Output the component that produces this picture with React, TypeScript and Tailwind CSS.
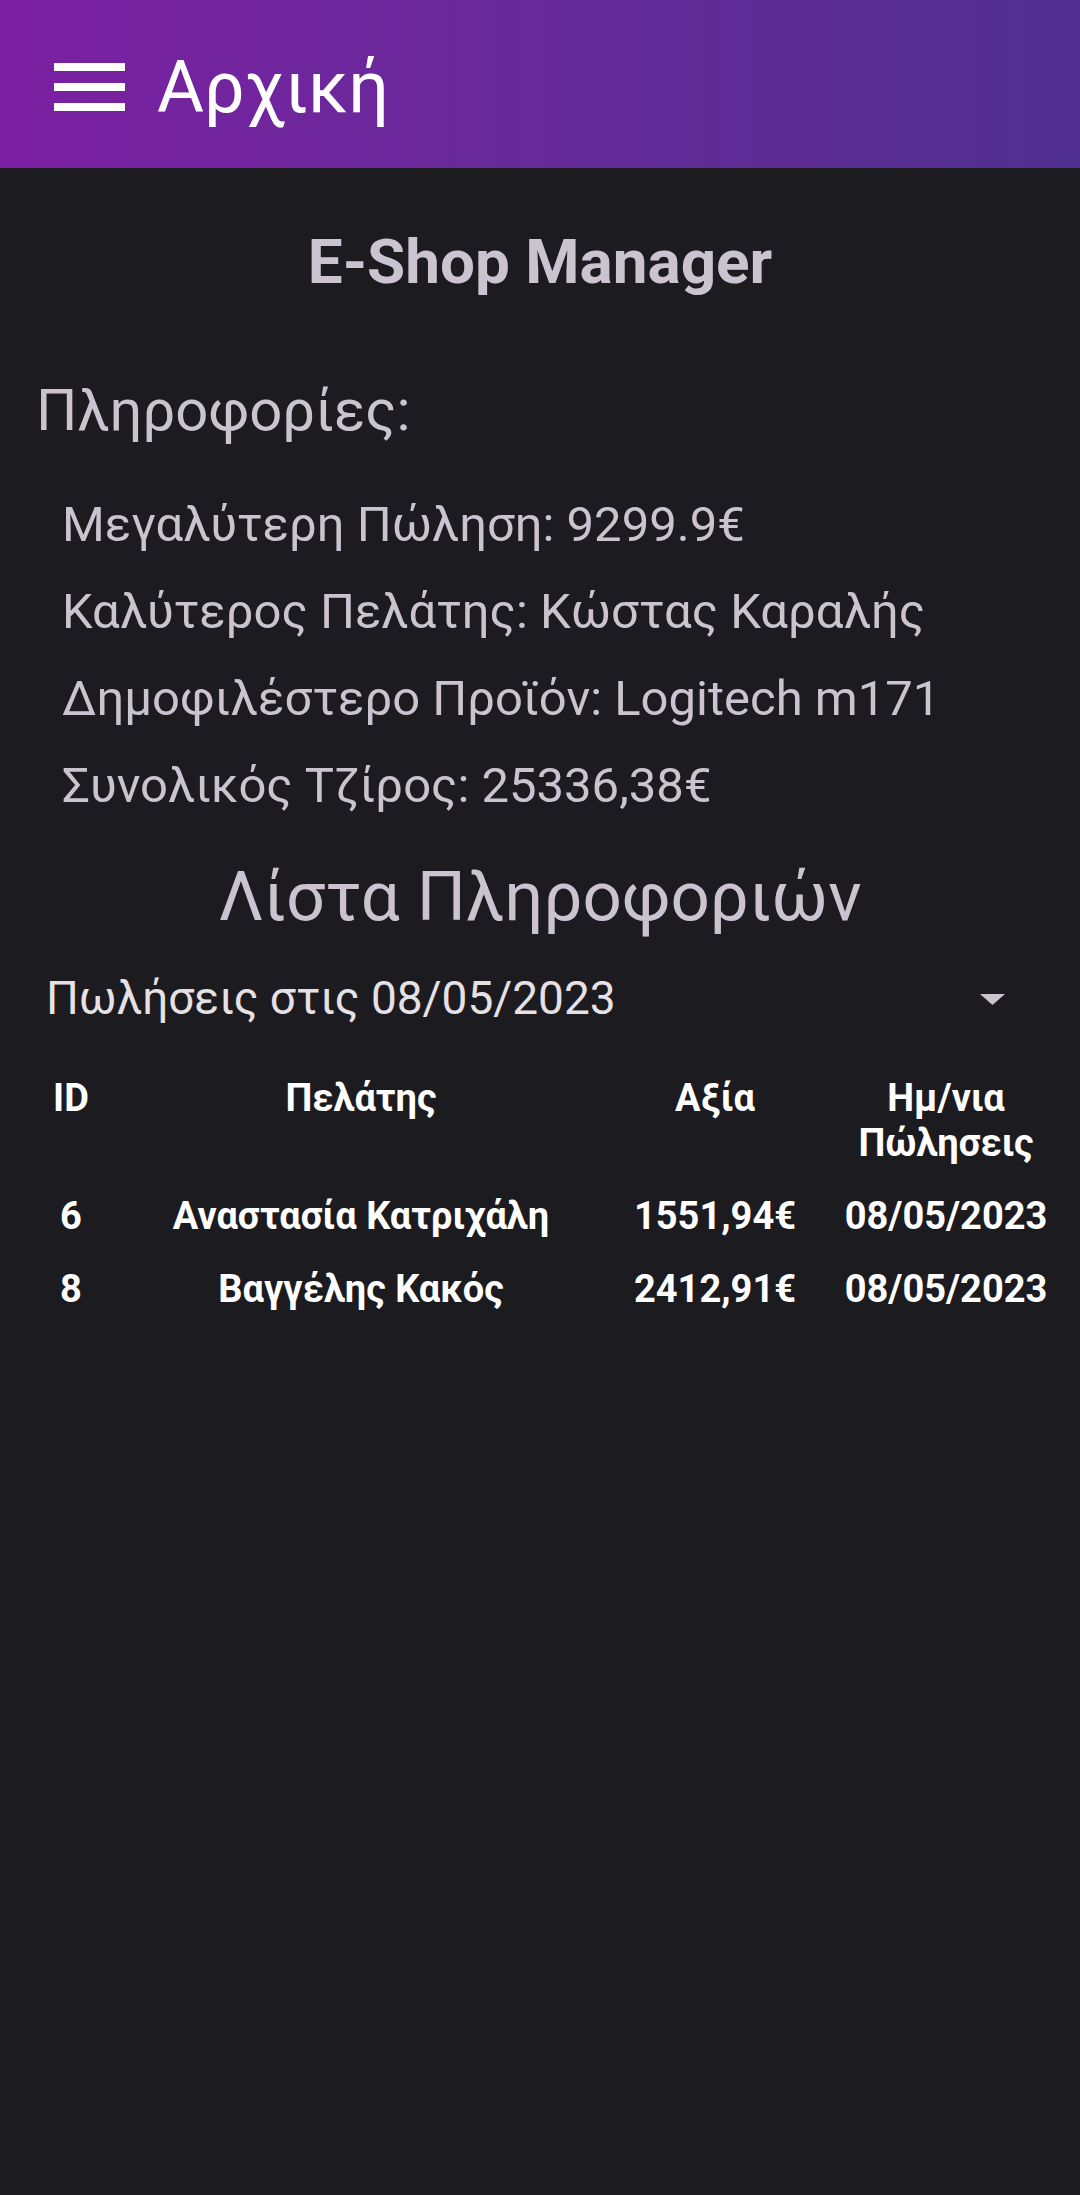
import React from 'react';

interface Sale {
  id: number;
  customer: string;
  amount: string;
  date: string;
}

const sales: Sale[] = [
  { id: 6, customer: 'Αναστασία Κατριχάλη', amount: '1551,94€', date: '08/05/2023' },
  { id: 8, customer: 'Βαγγέλης Κακός', amount: '2412,91€', date: '08/05/2023' },
];

const info = [
  'Μεγαλύτερη Πώληση: 9299.9€',
  'Καλύτερος Πελάτης: Κώστας Καραλής',
  'Δημοφιλέστερο Προϊόν: Logitech m171',
  'Συνολικός Τζίρος: 25336,38€',
];

const cols = 'grid grid-cols-[82px_498px_210px_252px] ml-[30px]';

export default function App() {
  return (
    <main
      className="min-h-[2195px] w-[1080px] bg-[#1c1b1f] text-[#cac4d0]"
      style={{ fontFamily: 'Roboto, "Noto Sans", sans-serif' }}
    >
      <header className="h-[168px] flex items-start pt-[52px] pl-[54px] bg-gradient-to-r from-[#7b1fa2] to-[#4f2f8f]">
        <div className="mt-[11px] flex flex-col gap-[12px]">
          <span className="block h-[8px] w-[71px] bg-white" />
          <span className="block h-[8px] w-[71px] bg-white" />
          <span className="block h-[8px] w-[71px] bg-white" />
        </div>
        <h1 className="ml-[32px] text-[72px] leading-none text-white font-normal">Αρχική</h1>
      </header>

      <h2 className="mt-[63px] text-center text-[62px] leading-none font-bold">E-Shop Manager</h2>

      <h3 className="mt-[88px] pl-[36px] text-[58px] leading-none font-normal">Πληροφορίες:</h3>

      <div className="mt-[42px] pl-[62px]">
        {info.map(line => (
          <p key={line} className="text-[49px] leading-[87px]">
            {line}
          </p>
        ))}
      </div>

      <h3 className="mt-[33px] text-center text-[69px] leading-none font-normal">Λίστα Πληροφοριών</h3>

      <div className="mt-[44px] flex items-center justify-between pl-[46px] pr-[75px]">
        <span className="text-[46px] leading-none text-[#e6e1e5]">Πωλήσεις στις 08/05/2023</span>
        <svg width="25" height="11" viewBox="0 0 25 11" className="mt-[2px]">
          <polygon points="0,0 25,0 12.5,11" fill="#cac4d0" />
        </svg>
      </div>

      <div className={`${cols} mt-[55px] text-white font-bold text-[38px] leading-[45px] text-center`}>
        <div>ID</div>
        <div>Πελάτης</div>
        <div>Αξία</div>
        <div className="px-[16px]">Ημ/νια Πώλησεις</div>
      </div>

      <div className="mt-[14px]">
        {sales.map(s => (
          <div
            key={s.id}
            className={`${cols} text-white font-bold text-[38px] leading-[73px] text-center whitespace-nowrap`}
          >
            <div>{s.id}</div>
            <div>{s.customer}</div>
            <div>{s.amount}</div>
            <div>{s.date}</div>
          </div>
        ))}
      </div>
    </main>
  );
}
